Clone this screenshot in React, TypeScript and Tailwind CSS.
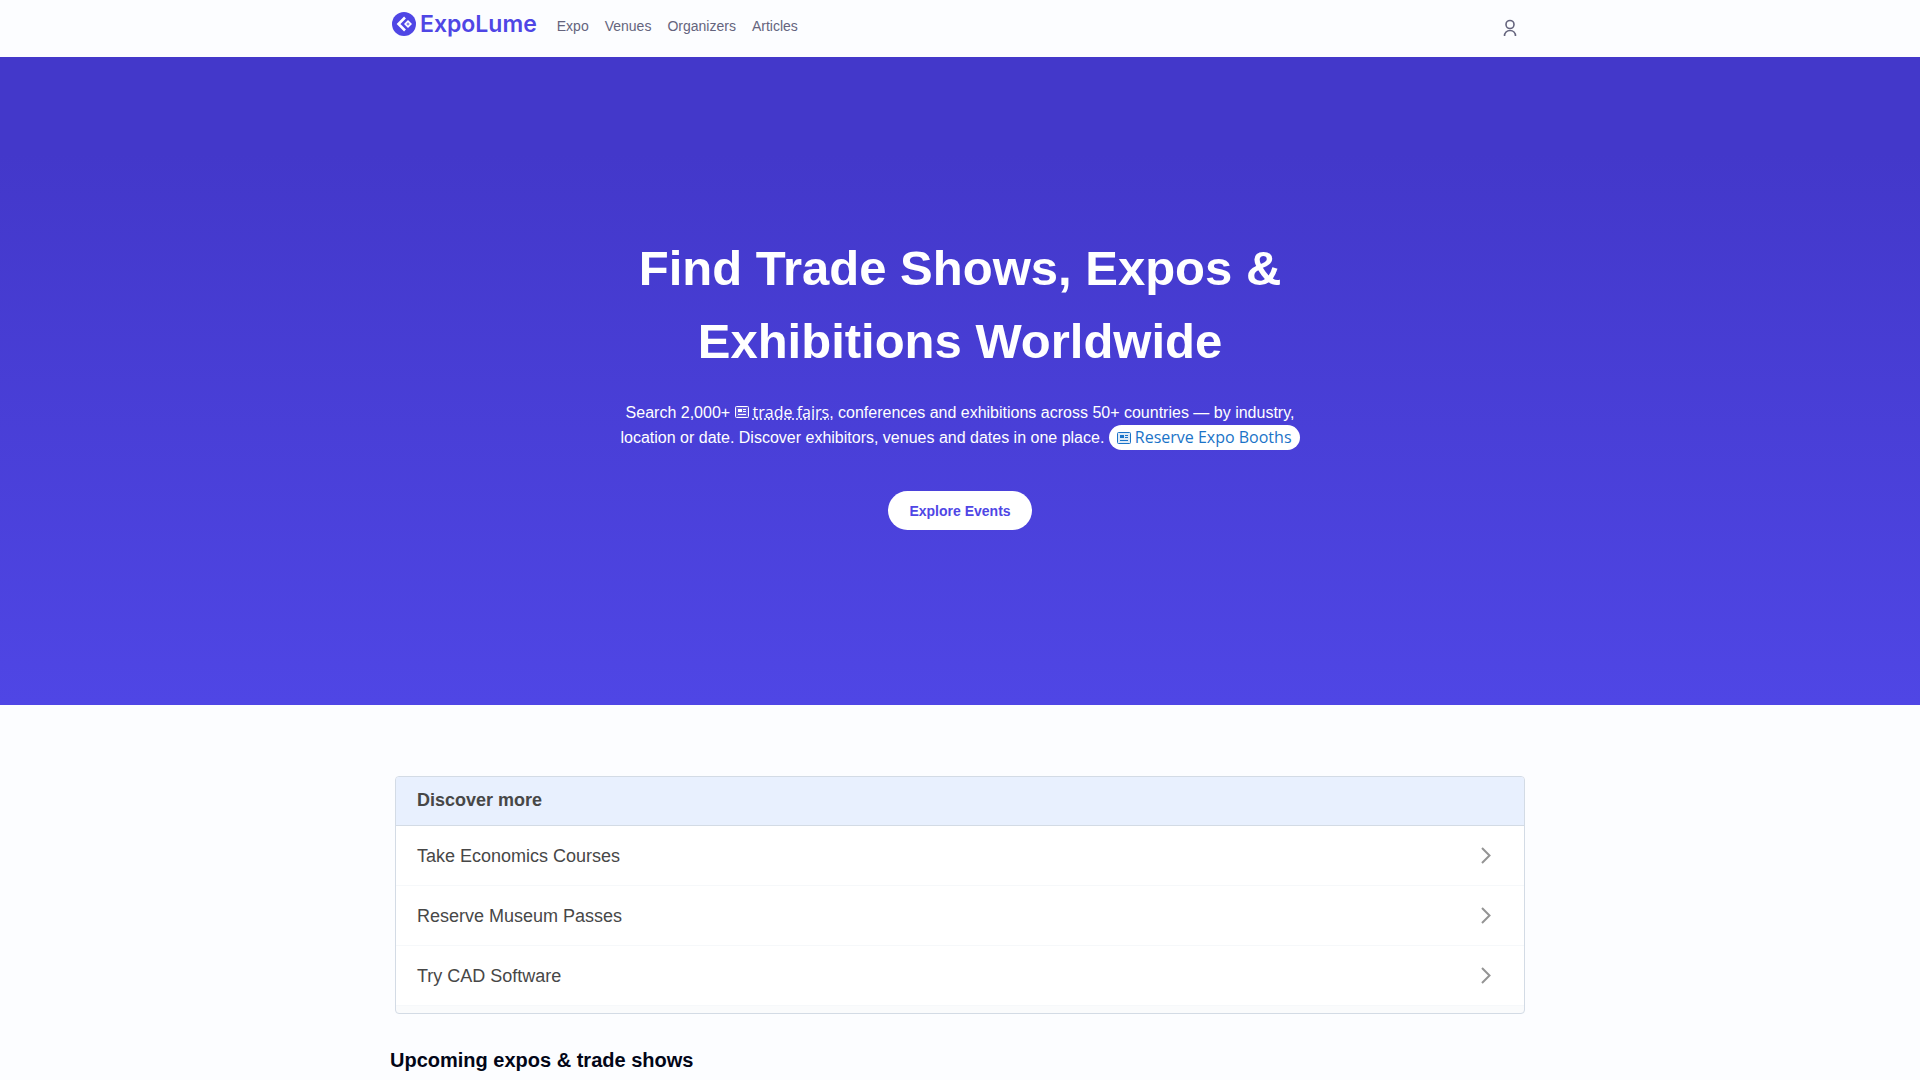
import React from 'react';

interface TopicRowProps {
    label: string;
}

const navItems = ['Expo', 'Venues', 'Organizers', 'Articles'];
const topics = ['Take Economics Courses', 'Reserve Museum Passes', 'Try CAD Software'];

const LogoMark: React.FC = () => (
    <svg viewBox="0 0 24 24" className="w-6 h-6" aria-hidden="true">
        <circle cx="12" cy="12" r="12" fill="#4f46e5" />
        <path d="M13 5.500 6.500 12l6.500 6.500" fill="none" stroke="#fff" strokeWidth="2.600" />
        <path d="M12 12 16 8l4 4-4 4z" fill="#fff" />
        <path d="M14.500 12h3M16 10.500v3" stroke="#4f46e5" strokeWidth="0.800" />
    </svg>
);

const NewsIcon: React.FC<{ className: string }> = ({ className }) => (
    <svg viewBox="0 0 14 12" className={className} fill="none" stroke="currentColor" aria-hidden="true">
        <rect x="0.5" y="0.5" width="13" height="11" rx="1" fill="currentColor" fillOpacity="0.15" />
        <rect x="3" y="3" width="4" height="3" fill="currentColor" stroke="none" />
        <path d="M8 3.500h3M8 5.500h3M3 8.500h8" />
    </svg>
);

const UserIcon: React.FC = () => (
    <svg viewBox="0 0 14 18" className="w-[14px] h-[18px]" fill="none" stroke="currentColor" strokeWidth="1.6" aria-hidden="true">
        <circle cx="7" cy="5.500" r="4" />
        <path d="M1.500 17c0-3.200 2.300-5.500 5.500-5.500s5.500 2.300 5.500 5.500" />
    </svg>
);

const TopicRow: React.FC<TopicRowProps> = ({ label }) => (
    <li className="bg-white border-b border-[#f6f8fa]">
        <a href="#" className="flex items-center justify-between h-[59px] pl-[21px] pr-[33px] text-lg text-[#474747]">
            {label}
            <svg viewBox="0 0 10 18" className="w-[10px] h-[18px]" fill="none" stroke="#949494" strokeWidth="2" aria-hidden="true">
                <path d="M1 1l7.500 7.500L1 16" />
            </svg>
        </a>
    </li>
);

const App: React.FC = () => {
    return (
        <div className="min-h-screen overflow-hidden bg-[#fcfdff] font-['Liberation_Sans',Arial,sans-serif]">
            <header className="h-[57px]">
                <div className="flex items-center max-w-[1140px] h-12 mx-auto px-[2px]">
                    <a href="#" className="flex items-center gap-1 text-[#4f46e5]">
                        <LogoMark />
                        <span className="font-['Inter',sans-serif] text-[23px] font-semibold">ExpoLume</span>
                    </a>
                    <nav className="flex gap-4 ml-5 pt-1 text-sm text-[#64647d]">
                        {navItems.map(item => (
                            <a key={item} href="#">{item}</a>
                        ))}
                    </nav>
                    <button aria-label="Account" className="ml-auto mr-[11px] pt-2 text-[#64647d]">
                        <UserIcon />
                    </button>
                </div>
            </header>

            <main>
                <section className="flex flex-col items-center justify-center min-h-[60vh] px-4 bg-linear-to-b from-[#4338ca] from-15% to-[#4f46e5] text-center text-white">
                    <h1 className="max-w-[700px] text-[49px] leading-[73px] font-bold">
                        Find Trade Shows, Expos &amp; Exhibitions Worldwide
                    </h1>
                    <p className="max-w-[700px] mt-[22px] text-base leading-[25px]">
                        Search 2,000+{' '}
                        <a href="#">
                            <NewsIcon className="inline w-[14px] h-3 mr-1 align-baseline" />
                            <span className="font-['Open_Sans',sans-serif] leading-none underline decoration-dotted">trade fairs</span>
                        </a>
                        , conferences and exhibitions across 50+ countries — by industry, location or date. Discover exhibitors, venues and dates in one place.{' '}
                        <a href="#" className="inline-flex items-center gap-1 h-[25px] px-2 rounded-full bg-white align-top font-['Open_Sans',sans-serif] text-[#1a73c8]">
                            <NewsIcon className="w-[14px] h-3" />
                            Reserve Expo Booths
                        </a>
                    </p>
                    <button className="h-[39px] mt-[41px] px-[21px] rounded-full bg-white text-sm font-bold text-[#4f46e5]">
                        Explore Events
                    </button>
                </section>

                <div className="max-w-[1140px] mx-auto pt-[71px]">
                    <section className="mx-[5px] overflow-hidden rounded border border-[#d3dbe5] bg-[#fafbfc]">
                        <h2 className="flex items-center h-[49px] pl-[21px] pb-[2px] border-b border-[#d3dbe5] bg-[#e8f0fe] text-lg font-bold text-[#474747]">
                            Discover more
                        </h2>
                        <ul className="pb-[7px]">
                            {topics.map(topic => (
                                <TopicRow key={topic} label={topic} />
                            ))}
                        </ul>
                    </section>
                    <h2 className="mt-[31px] text-xl leading-[30px] font-bold text-[#020617]">Upcoming expos &amp; trade shows</h2>
                </div>
            </main>
        </div>
    );
};

export default App;
